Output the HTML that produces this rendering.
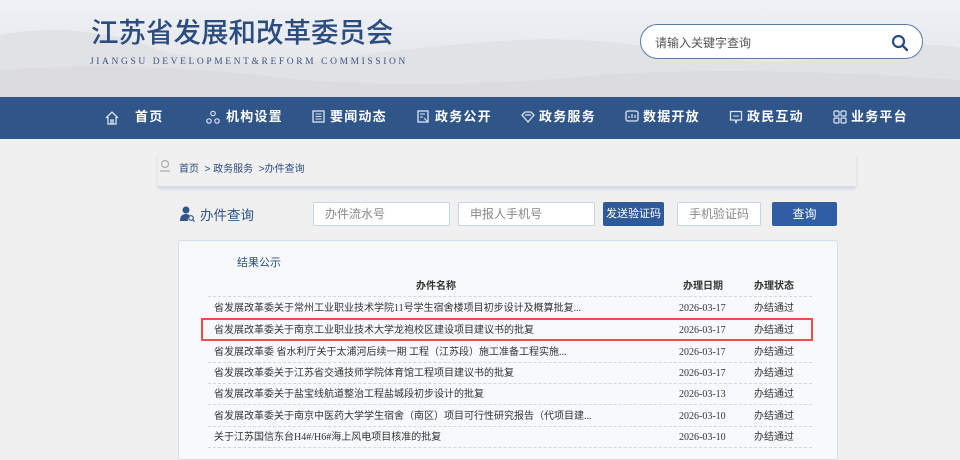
<!DOCTYPE html>
<html><head><meta charset="utf-8"><style>
*{margin:0;padding:0;box-sizing:border-box}
body{width:960px;height:453px;overflow:hidden;background:#f0f0f0;font-family:"Liberation Sans","Noto Sans CJK SC",sans-serif;position:relative}
.hdr{position:absolute;left:0;top:0;width:960px;height:97px;background:linear-gradient(180deg,#eef1f5 0%,#e6e8ec 60%,#e2e3e5 100%);overflow:hidden}
.abs{position:absolute}
.nav{position:absolute;left:0;top:97px;width:960px;height:42px;background:#2f5589}
.nav span{position:absolute;top:12px;color:#fff;font-size:13px;font-weight:bold;letter-spacing:1.2px;line-height:16px}
.nav svg{position:absolute;top:13px}
.inp{position:absolute;top:202px;height:24px;background:#fff;border:1px solid #c9d4e2;border-radius:2px;font-size:12px;color:#888;padding-left:11px;line-height:22px}
.btn{position:absolute;top:202px;height:24px;background:#2f5ea5;color:#fff;font-size:12px;text-align:center;line-height:24px;border-radius:2px}
.card{position:absolute;left:178px;top:240px;width:660px;height:220px;background:#f7f9fb;border:1px solid #d4dfec;border-radius:3px}
.row{position:absolute;left:208px;width:604px;height:21px;border-bottom:1px dashed #d6d6d6;font-size:10px;color:#333;line-height:21px;font-family:"Liberation Serif","Noto Sans CJK SC",serif}
.row .t{position:absolute;left:6px}
.row .d{position:absolute;left:471px}
.row .s{position:absolute;left:546px}
</style></head><body>
<div class="hdr">
<svg class="abs" style="left:0;top:0" width="960" height="97"><path d="M0 35 Q80 20 160 50 Q240 70 330 60 Q420 45 520 40 Q600 36 700 55 Q780 70 860 52 Q920 40 960 48 L960 97 L0 97Z" fill="#e0e2e6"/><path d="M0 70 Q150 60 300 80 Q450 90 600 75 Q750 65 960 80 L960 97 L0 97Z" fill="#dcdcde"/></svg>
<div class="abs" style="left:91px;top:12px;font-size:27.5px;color:#2b4c7e;font-weight:500;line-height:36px;font-family:'Noto Sans CJK SC',sans-serif">江苏省发展和改革委员会</div>
<div class="abs" style="left:90px;top:57px;font-size:9.5px;color:#3b5480;letter-spacing:2.6px;font-family:'Liberation Serif',serif">JIANGSU DEVELOPMENT&amp;REFORM COMMISSION</div>
<div class="abs" style="left:640px;top:24px;width:283px;height:35px;background:#fff;border:1px solid #5a7aa8;border-radius:18px"><span class="abs" style="left:14px;top:9px;font-size:12px;color:#555">请输入关键字查询</span>
<svg class="abs" style="left:250px;top:9px" width="18" height="18"><circle cx="7.5" cy="7.5" r="5.5" fill="none" stroke="#2b4c7e" stroke-width="2.2"/><path d="M11.5 11.5L16 16" stroke="#2b4c7e" stroke-width="2.4" stroke-linecap="round"/></svg></div>
</div>
<div class="nav">
<svg style="left:104px" width="16" height="16"><path d="M2 8L8 2L14 8M4 7V14H12V7M7 14V10H9V14" fill="none" stroke="#dde5f0" stroke-width="1.3"/></svg><span style="left:135px">首页</span>
<svg style="left:206px" width="14" height="14"><circle cx="7" cy="3.5" r="2.2" fill="none" stroke="#dde5f0" stroke-width="1.2"/><circle cx="3" cy="11" r="2.2" fill="none" stroke="#dde5f0" stroke-width="1.2"/><circle cx="11" cy="11" r="2.2" fill="none" stroke="#dde5f0" stroke-width="1.2"/></svg><span style="left:226px">机构设置</span>
<svg style="left:312px" width="13" height="13"><rect x="1" y="1" width="11" height="11" fill="none" stroke="#dde5f0" stroke-width="1.3"/><path d="M3.5 4H9.5M3.5 6.5H9.5M3.5 9H9.5" stroke="#dde5f0"/></svg><span style="left:330px">要闻动态</span>
<svg style="left:417px" width="13" height="13"><rect x="1" y="1" width="10" height="11" fill="none" stroke="#dde5f0" stroke-width="1.3"/><path d="M3 4H8M3 7H6M7 8L11 12" stroke="#dde5f0"/></svg><span style="left:435px">政务公开</span>
<svg style="left:521px" width="14" height="13"><path d="M7 12L1 5L4 2H10L13 5Z M4 5H10" fill="none" stroke="#dde5f0" stroke-width="1.3"/></svg><span style="left:539px">政务服务</span>
<svg style="left:625px" width="14" height="13"><rect x="1" y="1" width="12" height="10" rx="2" fill="none" stroke="#dde5f0" stroke-width="1.3"/><path d="M4 8V6M7 8V4M10 8V5" stroke="#dde5f0" stroke-width="1.2"/></svg><span style="left:643px">数据开放</span>
<svg style="left:729px" width="14" height="14"><path d="M1.5 1.5H12.5V10H8L7 12.5L6 10H1.5Z" fill="none" stroke="#dde5f0" stroke-width="1.3"/><path d="M4 6H10" stroke="#dde5f0"/></svg><span style="left:747px">政民互动</span>
<svg style="left:833px" width="14" height="14"><rect x="1" y="1" width="5" height="5" rx="1" fill="none" stroke="#dde5f0" stroke-width="1.2"/><rect x="8" y="1" width="5" height="5" rx="1" fill="none" stroke="#dde5f0" stroke-width="1.2"/><rect x="1" y="8" width="5" height="5" rx="1" fill="none" stroke="#dde5f0" stroke-width="1.2"/><rect x="8" y="8" width="5" height="5" rx="1" fill="none" stroke="#dde5f0" stroke-width="1.2"/></svg><span style="left:851px">业务平台</span>
</div>
<div class="abs" style="left:158px;top:154px;width:698px;height:33px;background:#f0f0f0;border-bottom:1px solid #d5dce8;box-shadow:0 2px 3px rgba(120,140,180,.25)"></div>
<svg class="abs" style="left:159px;top:159px" width="12" height="13"><circle cx="6" cy="5" r="3.5" fill="none" stroke="#aaa" stroke-width="1.2"/><path d="M1 12H11" stroke="#aaa" stroke-width="1.2"/></svg>
<div class="abs" style="left:179px;top:160px;font-size:10px;color:#2b4c7e">首页 &nbsp;&gt; 政务服务 &nbsp;&gt;办件查询</div>
<svg class="abs" style="left:180px;top:206px" width="15" height="16"><circle cx="6" cy="4" r="3.5" fill="#2f5589"/><path d="M0 15Q0 8 6 8Q9 8 10 10Q7 11 8 15Z" fill="#2f5589"/><circle cx="11" cy="12" r="2.3" fill="none" stroke="#2f5589" stroke-width="1.2"/><path d="M12.6 13.6L14.5 15.5" stroke="#2f5589" stroke-width="1.2"/></svg>
<div class="abs" style="left:200px;top:204px;font-size:13.5px;color:#2f5589">办件查询</div>
<div class="inp" style="left:313px;width:137px">办件流水号</div>
<div class="inp" style="left:458px;width:137px">申报人手机号</div>
<div class="btn" style="left:603px;width:61px;background:#2f5a9a;font-size:11px">发送验证码</div>
<div class="inp" style="left:677px;width:84px">手机验证码</div>
<div class="btn" style="left:772px;width:65px">查询</div>
<div class="card"></div>
<div class="abs" style="left:237px;top:254px;font-size:11px;color:#2b4c7e">结果公示</div>
<div class="row" style="top:276px;font-weight:bold;font-family:'Liberation Sans','Noto Sans CJK SC',sans-serif"><span class="abs" style="left:208px">办件名称</span><span class="d" style="left:475px">办理日期</span><span class="s">办理状态</span></div>
<div class="row" style="top:298px"><span class="t">省发展改革委关于常州工业职业技术学院11号学生宿舍楼项目初步设计及概算批复...</span><span class="d">2026-03-17</span><span class="s">办结通过</span></div>
<div class="row" style="top:320px"><span class="t">省发展改革委关于南京工业职业技术大学龙袍校区建设项目建议书的批复</span><span class="d">2026-03-17</span><span class="s">办结通过</span></div>
<div class="row" style="top:342px"><span class="t">省发展改革委 省水利厅关于太浦河后续一期 工程（江苏段）施工准备工程实施...</span><span class="d">2026-03-17</span><span class="s">办结通过</span></div>
<div class="row" style="top:363px"><span class="t">省发展改革委关于江苏省交通技师学院体育馆工程项目建议书的批复</span><span class="d">2026-03-17</span><span class="s">办结通过</span></div>
<div class="row" style="top:384px"><span class="t">省发展改革委关于盐宝线航道整治工程盐城段初步设计的批复</span><span class="d">2026-03-13</span><span class="s">办结通过</span></div>
<div class="row" style="top:406px"><span class="t">省发展改革委关于南京中医药大学学生宿舍（南区）项目可行性研究报告（代项目建...</span><span class="d">2026-03-10</span><span class="s">办结通过</span></div>
<div class="row" style="top:427px"><span class="t">关于江苏国信东台H4#/H6#海上风电项目核准的批复</span><span class="d">2026-03-10</span><span class="s">办结通过</span></div>
<div class="abs" style="left:201px;top:318px;width:612px;height:23px;border:2px solid #ee4d4d"></div>
</body></html>
